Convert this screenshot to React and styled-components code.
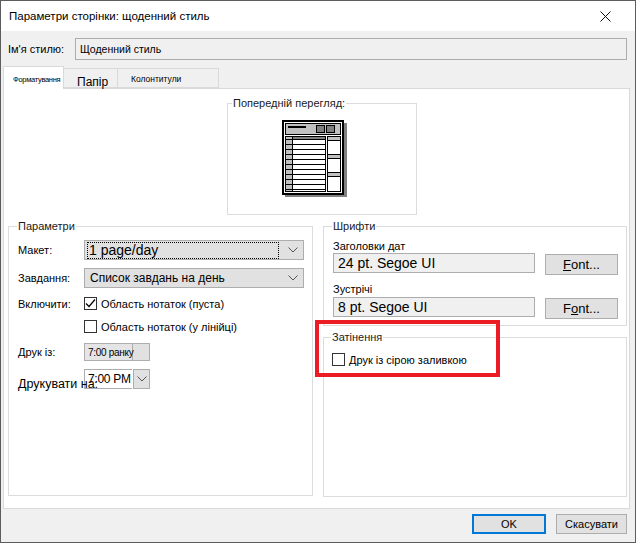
import styled, { createGlobalStyle } from "styled-components";

const GlobalStyle = createGlobalStyle`
  body {
    margin: 0;
    background: #fff;
    font-family: "Liberation Sans", Arial, sans-serif;
    color: #000;
  }
  * { box-sizing: border-box; }
`;

const Window = styled.div`
  width: 636px;
  height: 543px;
  border: 1px solid #5c5c5c;
  background: #f0f0f0;
  display: flex;
  flex-direction: column;
`;

const TitleBar = styled.div`
  height: 30px;
  background: #fff;
  display: flex;
  align-items: center;
  justify-content: space-between;
  padding: 0 24px 0 8px;
  font-size: 11.5px;
`;

const StyleRow = styled.div`
  display: flex;
  align-items: center;
  height: 36px;
  padding: 0 8px 0 7px;
  font-size: 11px;
`;

const StyleLabel = styled.span`
  width: 67px;
`;

const StyleInput = styled.div`
  flex: 1;
  height: 22px;
  border: 1px solid #adadad;
  background: #f0f0f0;
  display: flex;
  align-items: center;
  padding-left: 4px;
  font-size: 10.5px;
`;

const TabRow = styled.div`
  display: flex;
  align-items: flex-end;
  height: 21px;
  padding-left: 2px;
  position: relative;
  z-index: 1;
`;

const Tab = styled.div`
  height: ${(p) => (p.$active ? 23 : 20)}px;
  width: ${(p) => p.$w}px;
  margin-bottom: ${(p) => (p.$active ? -1 : 0)}px;
  background: ${(p) => (p.$active ? "#fff" : "#f0f0f0")};
  border: 1px solid #d9d9d9;
  border-bottom: ${(p) => (p.$active ? "none" : "1px solid #d9d9d9")};
  border-left: ${(p) => (p.$first ? "1px solid #d9d9d9" : "none")};
  font-size: ${(p) => p.$size}px;
  letter-spacing: ${(p) => p.$ls || 0}px;
  padding: ${(p) => p.$pad};
  white-space: nowrap;
`;

const Panel = styled.div`
  height: 421px;
  margin: 0 5px 0 2px;
  background: #fff;
  border: 1px solid #d9d9d9;
  display: flex;
  flex-direction: column;
  padding: 0 3px 0 4px;
`;

const Group = styled.fieldset`
  margin: 0;
  min-width: 0;
  border: 1px solid #dcdcdc;
  padding: 0 8px 0 9px;
`;

const Legend = styled.legend`
  font-size: 11px;
  line-height: 13px;
  padding: 0 1px;
  margin-left: ${(p) => p.$ml ?? -1}px;
  color: #1a1a1a;
`;

const PreviewGroup = styled(Group)`
  width: 190px;
  height: 118px;
  margin: 8px 0 0 219px;
  padding: 10px 0 0 0;
`;

const PreviewIcon = styled.div`
  margin-left: 54px;
  width: 66px;
  height: 78px;
`;

const Columns = styled.div`
  display: grid;
  grid-template-columns: 305px 304px;
  gap: 10px;
  margin-top: 5px;
`;

const LeftGroup = styled(Group)`
  height: 276px;
  padding-top: 7px;
`;

const RightColumn = styled.div`
  display: flex;
  flex-direction: column;
  gap: 5px;
  position: relative;
`;

const FieldRow = styled.div`
  display: grid;
  grid-template-columns: 66px 1fr;
  align-items: center;
  margin-top: ${(p) => p.$mt}px;
  font-size: 11px;
`;

const FieldLabel = styled.span`
  white-space: nowrap;
  font-size: ${(p) => p.$size || 11}px;
  align-self: ${(p) => (p.$low ? "end" : "center")};
  margin-bottom: ${(p) => (p.$low ? -2 : 0)}px;
  position: relative;
  z-index: 2;
`;

const Combo = styled.div`
  height: 20px;
  border: 1px solid #adadad;
  background: #e1e1e1;
  display: flex;
  align-items: center;
  justify-content: space-between;
  padding: 0 5px 0 3px;
  font-size: ${(p) => p.$size}px;
`;

const FocusText = styled.span`
  flex: 1;
  outline: 1px dotted #000;
  padding: 0 1px;
  margin-right: 10px;
  line-height: 15px;
`;

const ComboText = styled.span`
  padding-left: 2px;
`;

const CheckRow = styled.label`
  display: flex;
  align-items: center;
  gap: 4px;
  font-size: 11px;
  margin-top: ${(p) => p.$mt || 0}px;
`;

const Box = styled.span`
  width: 13px;
  height: 13px;
  border: 1px solid #333;
  background: #fff;
  display: inline-flex;
  align-items: center;
  justify-content: center;
`;

const TimeControl = styled.div`
  display: flex;
  height: ${(p) => p.$h}px;
  width: 66px;
`;

const TimeField = styled.div`
  width: 48px;
  border: 1px solid #adadad;
  border-right: none;
  background: ${(p) => (p.$white ? "#fff" : "#e5e5e5")};
  font-size: ${(p) => p.$size}px;
  letter-spacing: -0.3px;
  display: flex;
  align-items: center;
  padding-left: 3px;
  white-space: nowrap;
  overflow: visible;
  position: relative;
  z-index: 1;
`;

const SpinButton = styled.div`
  flex: 1;
  border: 1px solid #adadad;
  background: #e1e1e1;
  margin-left: ${(p) => (p.$gap ? 1 : 0)}px;
  display: flex;
  align-items: center;
  justify-content: center;
`;

const FontsGroup = styled(Group)`
  height: 106px;
`;

const SmallLabel = styled.div`
  font-size: 11px;
  line-height: 13px;
  margin-top: ${(p) => p.$mt}px;
`;

const FontRow = styled.div`
  display: grid;
  grid-template-columns: 202px 73px;
  gap: 10px;
  margin-top: ${(p) => p.$mt}px;
`;

const FontBox = styled.div`
  height: 20px;
  border: 1px solid #adadad;
  background: #f0f0f0;
  font-size: 14px;
  display: flex;
  align-items: center;
  padding-left: 4px;
`;

const Button = styled.button`
  height: ${(p) => p.$h || 21}px;
  width: ${(p) => (p.$w ? `${p.$w}px` : "auto")};
  margin-top: ${(p) => (p.$h ? 0 : 1)}px;
  border: ${(p) => (p.$primary ? "2px solid #0078d7" : "1px solid #adadad")};
  background: #e1e1e1;
  font-family: inherit;
  font-size: ${(p) => p.$size || 13}px;
  color: #000;
  padding: 0;
  text-align: center;
`;

const ShadeGroup = styled(Group)`
  height: 166px;
  padding-left: 8px;
`;

const Highlight = styled.div`
  position: absolute;
  left: -8px;
  top: 100px;
  width: 185px;
  height: 57px;
  border: 4px solid #ec1c24;
  pointer-events: none;
`;

const Footer = styled.div`
  display: flex;
  justify-content: flex-end;
  gap: 10px;
  padding: 5px 8px 0 0;
`;

function Chevron({ color = "#555" }) {
  return (
    <svg width="10" height="6" viewBox="0 0 10 6">
      <path d="M0.5 0.5 L5 5 L9.5 0.5" fill="none" stroke={color} strokeWidth="1" />
    </svg>
  );
}

function Check({ checked }) {
  return (
    <Box>
      {checked && (
        <svg width="11" height="11" viewBox="0 0 11 11">
          <path d="M1 5.5 L4 8.5 L10 1.5" fill="none" stroke="#000" strokeWidth="1.2" />
        </svg>
      )}
    </Box>
  );
}

function CalendarPreview() {
  const rows = Array.from({ length: 11 }, (_, i) => 19 + i * 5);
  return (
    <svg width="66" height="78" viewBox="0 0 66 78">
      <rect x="3" y="3" width="62" height="74" fill="#808080" />
      <rect x="1" y="1" width="60" height="73" fill="#fff" stroke="#000" strokeWidth="2" />
      <rect x="3.5" y="3.5" width="55" height="11" fill="#c0c0c0" stroke="#000" />
      <rect x="6" y="6" width="18" height="2" fill="#000" />
      <rect x="34.5" y="5.5" width="8" height="7" fill="#808080" stroke="#000" />
      <rect x="44.5" y="5.5" width="8" height="7" fill="#808080" stroke="#000" />
      <rect x="3.5" y="16.5" width="40" height="55" fill="#fff" stroke="#000" />
      <rect x="4" y="17" width="6" height="54" fill="#c0c0c0" />
      <line x1="10.5" y1="16.5" x2="10.5" y2="71.5" stroke="#000" />
      <rect x="11" y="17" width="32" height="3" fill="#808080" />
      {rows.map((y) => (
        <line key={y} x1="3.5" y1={y + 0.5} x2="43.5" y2={y + 0.5} stroke="#000" />
      ))}
      <rect x="45.5" y="16.5" width="13" height="55" fill="#fff" stroke="#000" />
      <rect x="46" y="17" width="12" height="3" fill="#c0c0c0" />
      <line x1="45.5" y1="20.5" x2="58.5" y2="20.5" stroke="#000" />
      <line x1="45.5" y1="34.5" x2="58.5" y2="34.5" stroke="#000" />
      <rect x="46" y="35" width="12" height="3" fill="#c0c0c0" />
      <line x1="45.5" y1="38.5" x2="58.5" y2="38.5" stroke="#000" />
      <line x1="45.5" y1="52.5" x2="58.5" y2="52.5" stroke="#000" />
      <rect x="46" y="53" width="12" height="3" fill="#c0c0c0" />
      <line x1="45.5" y1="56.5" x2="58.5" y2="56.5" stroke="#000" />
    </svg>
  );
}

export default function App() {
  return (
    <>
      <GlobalStyle />
      <Window>
        <TitleBar>
          <span>Параметри сторінки: щоденний стиль</span>
          <svg width="11" height="11" viewBox="0 0 11 11">
            <path d="M0.5 0.5 L10.5 10.5 M10.5 0.5 L0.5 10.5" stroke="#111" strokeWidth="1" />
          </svg>
        </TitleBar>

        <StyleRow>
          <StyleLabel>Ім'я стилю:</StyleLabel>
          <StyleInput>Щоденний стиль</StyleInput>
        </StyleRow>

        <TabRow>
          <Tab $active $first $w={61} $size={7.5} $ls={-0.3} $pad="8px 0 0 9px">Форматування</Tab>
          <Tab $w={54} $size={12} $pad="6px 0 0 13px">Папір</Tab>
          <Tab $w={101} $size={8.5} $pad="5px 0 0 13px">Колонтитули</Tab>
        </TabRow>

        <Panel>
          <PreviewGroup>
            <Legend $ml={4}>Попередній перегляд:</Legend>
            <PreviewIcon>
              <CalendarPreview />
            </PreviewIcon>
          </PreviewGroup>

          <Columns>
            <LeftGroup>
              <Legend>Параметри</Legend>
              <FieldRow $mt={0}>
                <FieldLabel>Макет:</FieldLabel>
                <Combo $size={14}>
                  <FocusText>1 page/day</FocusText>
                  <Chevron />
                </Combo>
              </FieldRow>
              <FieldRow $mt={8}>
                <FieldLabel>Завдання:</FieldLabel>
                <Combo $size={12}>
                  <ComboText>Список завдань на день</ComboText>
                  <Chevron />
                </Combo>
              </FieldRow>
              <FieldRow $mt={9}>
                <FieldLabel>Включити:</FieldLabel>
                <CheckRow>
                  <Check checked />
                  Область нотаток (пуста)
                </CheckRow>
              </FieldRow>
              <FieldRow $mt={10}>
                <span />
                <CheckRow>
                  <Check />
                  Область нотаток (у лінійці)
                </CheckRow>
              </FieldRow>
              <FieldRow $mt={10}>
                <FieldLabel>Друк із:</FieldLabel>
                <TimeControl $h={18}>
                  <TimeField $size={10}>7:00 ранку</TimeField>
                  <SpinButton />
                </TimeControl>
              </FieldRow>
              <FieldRow $mt={8}>
                <FieldLabel $size={12.5} $low>Друкувати на:</FieldLabel>
                <TimeControl $h={20}>
                  <TimeField $white $size={12}>7:00 PM</TimeField>
                  <SpinButton $gap>
                    <Chevron />
                  </SpinButton>
                </TimeControl>
              </FieldRow>
            </LeftGroup>

            <RightColumn>
              <FontsGroup>
                <Legend>Шрифти</Legend>
                <SmallLabel $mt={7}>Заголовки дат</SmallLabel>
                <FontRow $mt={0}>
                  <FontBox>24 pt. Segoe UI</FontBox>
                  <Button>
                    <u>F</u>ont...
                  </Button>
                </FontRow>
                <SmallLabel $mt={8}>Зустрічі</SmallLabel>
                <FontRow $mt={1}>
                  <FontBox>8 pt. Segoe UI</FontBox>
                  <Button>
                    F<u>o</u>nt...
                  </Button>
                </FontRow>
              </FontsGroup>

              <ShadeGroup>
                <Legend>Затінення</Legend>
                <CheckRow $mt={9}>
                  <Check />
                  Друк із сірою заливкою
                </CheckRow>
              </ShadeGroup>

              <Highlight />
            </RightColumn>
          </Columns>
        </Panel>

        <Footer>
          <Button $primary $h={20} $w={74} $size={11}>
            OK
          </Button>
          <Button $h={20} $w={71} $size={11}>
            Скасувати
          </Button>
        </Footer>
      </Window>
    </>
  );
}
